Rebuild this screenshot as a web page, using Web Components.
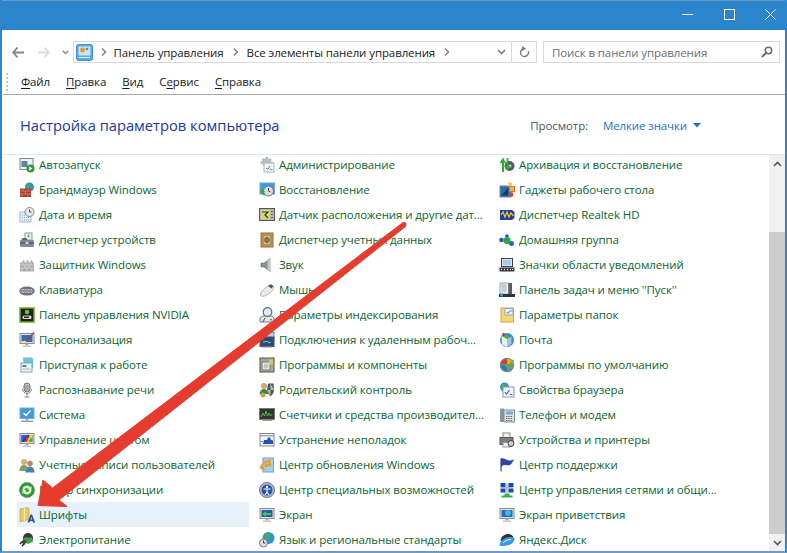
<!DOCTYPE html>
<html lang="ru">
<head>
<meta charset="utf-8">
<title>Все элементы панели управления</title>
<style>
  html, body { margin: 0; padding: 0; height: 100%; overflow: hidden; background: #fff; }
  body { font-family: "Open Sans", "Noto Sans", sans-serif; }
</style>
</head>
<body>
<cp-window>
  <cp-titlebar></cp-titlebar>
  <cp-navbar></cp-navbar>
  <cp-menubar></cp-menubar>
  <cp-header></cp-header>
  <cp-list>
    <cp-item icon="autoplay">Автозапуск</cp-item>
    <cp-item icon="admin">Администрирование</cp-item>
    <cp-item icon="backup">Архивация и восстановление</cp-item>
    <cp-item icon="firewall">Брандмауэр Windows</cp-item>
    <cp-item icon="recovery">Восстановление</cp-item>
    <cp-item icon="gadgets">Гаджеты рабочего стола</cp-item>
    <cp-item icon="clock">Дата и время</cp-item>
    <cp-item icon="sensor">Датчик расположения и другие дат...</cp-item>
    <cp-item icon="realtek">Диспетчер Realtek HD</cp-item>
    <cp-item icon="devices">Диспетчер устройств</cp-item>
    <cp-item icon="safe">Диспетчер учетных данных</cp-item>
    <cp-item icon="homegroup">Домашняя группа</cp-item>
    <cp-item icon="defender">Защитник Windows</cp-item>
    <cp-item icon="sound">Звук</cp-item>
    <cp-item icon="tray">Значки области уведомлений</cp-item>
    <cp-item icon="keyboard">Клавиатура</cp-item>
    <cp-item icon="mouse">Мышь</cp-item>
    <cp-item icon="taskbar">Панель задач и меню ''Пуск''</cp-item>
    <cp-item icon="nvidia">Панель управления NVIDIA</cp-item>
    <cp-item icon="index">Параметры индексирования</cp-item>
    <cp-item icon="folderopt">Параметры папок</cp-item>
    <cp-item icon="personal">Персонализация</cp-item>
    <cp-item icon="remote">Подключения к удаленным рабоч...</cp-item>
    <cp-item icon="mail">Почта</cp-item>
    <cp-item icon="start">Приступая к работе</cp-item>
    <cp-item icon="programs">Программы и компоненты</cp-item>
    <cp-item icon="defaults">Программы по умолчанию</cp-item>
    <cp-item icon="speech">Распознавание речи</cp-item>
    <cp-item icon="parental">Родительский контроль</cp-item>
    <cp-item icon="browser">Свойства браузера</cp-item>
    <cp-item icon="system">Система</cp-item>
    <cp-item icon="perf">Счетчики и средства производител...</cp-item>
    <cp-item icon="phone">Телефон и модем</cp-item>
    <cp-item icon="color">Управление цветом</cp-item>
    <cp-item icon="trouble">Устранение неполадок</cp-item>
    <cp-item icon="printer">Устройства и принтеры</cp-item>
    <cp-item icon="users">Учетные записи пользователей</cp-item>
    <cp-item icon="update">Центр обновления Windows</cp-item>
    <cp-item icon="support">Центр поддержки</cp-item>
    <cp-item icon="sync">Центр синхронизации</cp-item>
    <cp-item icon="access">Центр специальных возможностей</cp-item>
    <cp-item icon="network">Центр управления сетями и общи...</cp-item>
    <cp-item icon="fonts" selected>Шрифты</cp-item>
    <cp-item icon="screen">Экран</cp-item>
    <cp-item icon="welcome">Экран приветствия</cp-item>
    <cp-item icon="power">Электропитание</cp-item>
    <cp-item icon="lang">Язык и региональные стандарты</cp-item>
    <cp-item icon="yadisk">Яндекс.Диск</cp-item>
  </cp-list>
  <cp-arrow></cp-arrow>
</cp-window>

<script>
// monitor outline shared by several of the control panel icons
function monitor(screen) {
  return `<rect x="1" y="1.5" width="14" height="10" fill="#dfe3e6" stroke="#8a9096"/>
    <rect x="2.5" y="3" width="11" height="7" fill="${screen}"/>
    <rect x="6.5" y="11.5" width="3" height="2" fill="#a9adb1"/><rect x="4" y="13.5" width="8" height="1.5" fill="#c4c7ca"/>`;
}
function globe(cx, cy, r) {
  return `<circle cx="${cx}" cy="${cy}" r="${r}" fill="#2f8fd8"/>
    <path d="M${cx - r * .7} ${cy - r * .5}q${r * .6} -${r * .4} ${r} 0q-${r * .1} ${r * .7} -${r * .6} ${r * .8}z" fill="#4caf3c"/>`;
}

const ICONS = {
  autoplay: `<rect x="1" y="1.5" width="13" height="11" fill="#eef2f5" stroke="#7d8890"/><rect x="2.5" y="4" width="6" height="6" fill="#5a8a9c"/><circle cx="11.5" cy="11.5" r="4" fill="#2f9a3a"/><path d="M10.2 9.3l3.2 2.2-3.2 2.2z" fill="#fff"/>`,
  firewall: globe(10.5, 5, 4.5) + `<rect x="1" y="6.5" width="11" height="8.5" fill="#a6402c"/><path d="M1 9h11M1 12h11M4 6.5V9M9 6.500V9M6.500 9v3M3 12v3M9 12v3" stroke="#d98f78" stroke-width=".7"/>`,
  clock: `<rect x="1" y="5" width="11" height="10" fill="#e8f0f8" stroke="#a8b8c8"/><path d="M3 8h7M3 10.5h7M3 13h7" stroke="#6fa8dc" stroke-dasharray="1 1"/><circle cx="10.5" cy="5" r="4.5" fill="#e8e8e4" stroke="#8a8a86"/><path d="M10.5 2.5V5h2" fill="none" stroke="#555"/>`,
  devices: `<rect x="6" y="1" width="7" height="7" fill="#eef2ee" stroke="#8e9a90"/><path d="M9.5 2.5v3" stroke="#4caf50" stroke-width="1.5"/><path d="M2.5 8l1-2h4l1 2z" fill="#666"/><rect x="1" y="8" width="14" height="7" rx="1" fill="#7d8c9a"/><path d="M1 11h14" stroke="#3c4850"/><rect x="6.5" y="10" width="3" height="2" fill="#d0d6da"/>`,
  defender: `<path d="M1 14.5v-9h2.5v-2h2v2h2v-2h2v2h2v-2h2v2H15v9z" fill="#a8abaa"/><path d="M1 8h14M1 11h14M4 5.5v2.500M8 5.500v2.500M12 5.500v2.500M6 8v3M10 8v3M3 11v3.500M8 11v3.500M13 11v3.500" stroke="#d9dbda" stroke-width=".8"/>`,
  keyboard: `<ellipse cx="8" cy="9" rx="7.8" ry="4.5" fill="#6b7279"/><path d="M2.5 7.5h11M1.5 9h13M2.5 10.5h11" stroke="#d4d8db" stroke-dasharray="1 .6"/>`,
  nvidia: `<rect x="1" y="1" width="14" height="14" fill="#1d1d1d" stroke="#6fae1c" stroke-width="1.5"/><circle cx="8" cy="5" r="2.2" fill="#76c925"/><rect x="3.5" y="8.5" width="9" height="3.5" rx="1.5" fill="#d8d8d8"/><rect x="5" y="9.5" width="5" height="1.5" fill="#222"/>`,
  personal: monitor('#2b6fc0') + `<path d="M5 9.5l3-1 1.500-3L5 9z" fill="#38a838"/><path d="M7 9l8-8.500" stroke="#c8352a" stroke-width="1.3"/><path d="M3 9.500h4" stroke="#f0e060"/>`,
  start: `<path d="M4 .5h9l1 1.500v9l-9 .5z" fill="#6cc4d8"/><rect x="2" y="6" width="11" height="9" fill="#eef4f8" stroke="#7aa8c0"/><rect x="3.5" y="8" width="4" height="2" fill="#3a8fc0"/><path d="M3.500 12h8" stroke="#9bb8c8"/>`,
  speech: `<rect x="5" y="1" width="6" height="9" rx="3" fill="#c4c9cd" stroke="#6f767c"/><path d="M5.500 4h5M5.500 6h5M5.500 8h5" stroke="#6f767c" stroke-width=".7"/><path d="M3.500 7a4.500 4.500 0 0 0 9 0M8 11.500V15M5.500 15h5" fill="none" stroke="#7d848a"/>`,
  system: `<rect x="1" y="1" width="14" height="10.5" fill="#3f9be0" stroke="#7fa8c8"/><path d="M4.500 6L7 8.500l4.500-5" fill="none" stroke="#fff" stroke-width="1.5"/><rect x="6.5" y="11.5" width="3" height="2" fill="#a9adb1"/><rect x="2" y="13.5" width="12" height="1.5" fill="#9aa0a5"/>`,
  color: monitor('#1c2f9c') + `<path d="M5 10l3.500-7 1.500 7z" fill="#e8322a"/><path d="M8 10l2.500-7h3v7z" fill="#f0d020"/><path d="M2.500 10V3h6z" fill="#2060e0"/><path d="M9.500 10l2-4 2 1v3z" fill="#2cb84a"/>`,
  users: `<circle cx="5" cy="5" r="3" fill="#d8b080"/><path d="M.5 14c0-4 2-6 4.500-6s4.500 2 4.500 6z" fill="#7fa060"/><circle cx="11" cy="6.5" r="2.8" fill="#b88a5c"/><path d="M6.500 15.500c0-4 2-6 4.500-6s4.500 2 4.500 6z" fill="#4a80b8"/>`,
  sync: `<circle cx="8" cy="8" r="7.5" fill="#2c9a34" stroke="#5a7a5c" stroke-width=".6"/><path d="M3.500 8a4.500 4.500 0 0 1 7.800-3l1.200-1v4h-4l1.200-1.200A2.800 2.800 0 0 0 5.300 8zM12.500 8a4.500 4.500 0 0 1-7.800 3l-1.200 1V8h4L6.300 9.200A2.800 2.800 0 0 0 10.700 8z" fill="#d8f4c8"/>`,
  fonts: `<path d="M1 2l8-1.500 1 1v11l-9 2.500z" fill="#e6c868" stroke="#b0903a" stroke-width=".5"/><path d="M5.500 1v12.500" stroke="#f6e8a8" stroke-width="1.500"/><path d="M8.500 15.500l3-8h1.500l3 8h-2l-.5-1.600h-2.500l-.5 1.600zm3-3h1.500l-.7-2.400z" fill="#1c4cb0"/>`,
  power: `<circle cx="9" cy="6" r="5" fill="#3a3a3a"/><path d="M5 5.500h8l1 4-5 2.500-4-2.500z" fill="#3fa044"/><path d="M4 9l-3 3M6 11l-3 3" stroke="#222" stroke-width="1.5"/><rect x="3" y="8" width="4" height="4" transform="rotate(45 5 10)" fill="#444"/>`,
  admin: `<path d="M7 0h2l.5 2 1.800-.8 1.400 1.400L12 4.500l2 .5v2l-2 .5.400 1h-8L3.500 7l-2-.5v-2l2-.5-.8-1.800L4 .9l1.800.9z" fill="#b8bcc0"/><rect x="5" y="6" width="10" height="9" fill="#f2f6fa" stroke="#a4b4c4"/><path d="M7 11l1.500 1.500L11 9" fill="none" stroke="#3a7fd0"/><path d="M11.500 12.500h2" stroke="#3a7fd0"/>`,
  recovery: `<rect x="1" y="1" width="14.5" height="11" fill="#3f9be0" stroke="#6fa8cc"/><circle cx="9.5" cy="9" r="5" fill="#d8dcde" stroke="#6d7478"/><path d="M9.500 6v3l2 1" fill="none" stroke="#444"/><path d="M1 10l2.500-3L6 10H4.500c0 2 1 3 2.500 3.500-2.500.5-4.500-1-4.500-3.500z" fill="#36a83a"/>`,
  sensor: `<rect x=".5" y="1.5" width="15" height="12" fill="#b8bab0" stroke="#55584f"/><rect x="2" y="3" width="9" height="9" fill="#d8d868"/><path d="M3 5h6L6 8l3 3" fill="none" stroke="#333" stroke-width="1.2"/><path d="M13 4v1M13 7v1M13 10v1" stroke="#222" stroke-width="1.2"/>`,
  safe: `<rect x="2" y="1" width="12" height="14" fill="#c4a062" stroke="#8a6c38"/><rect x="4" y="3" width="8" height="10" fill="#d4b47c" stroke="#9c7c44"/><circle cx="8" cy="8" r="2.3" fill="#a08048" stroke="#6c5428"/>`,
  sound: `<path d="M2 6h3l6-4.500v13L5 10H2z" fill="#8c9196" stroke="#63686c" stroke-width=".6"/><path d="M8.500 3v10l2.500 1.500v-13z" fill="#c6c9cc"/>`,
  mouse: `<path d="M1.500 12C3 8 8 4 12 3c2 0 3 2 2.500 3.500-1 3-5 6-9 7.500-3 .800-4.500 0-4-2z" fill="#e8eaec" stroke="#9a9ea2" stroke-width=".7"/><path d="M9 3.500c2-1.500 4.500-1.500 5.500 1L12 6.500z" fill="#50606c"/>`,
  index: `<path d="M1 15v-4l3-2h9l2 2v4z" fill="#e4e6e8" stroke="#7a8084"/><circle cx="8.5" cy="5" r="4.3" fill="#dfeefa" stroke="#5a6c7a" stroke-width="1.2"/><path d="M4 15l2-4" stroke="#5a6c7a" stroke-width="1.2"/><rect x="11" y="12" width="2" height="1.3" fill="#3cb04a"/>`,
  remote: `<rect x="4" y=".5" width="11" height="8" fill="#b4cfe8" stroke="#6c8cac"/><rect x="1" y="5" width="14" height="9.5" fill="#2a4a80" stroke="#555"/><path d="M4 10h2l2-1 2 2 2-1" stroke="#7fe07f" fill="none"/><rect x="3" y="14.5" width="10" height="1" fill="#888"/>`,
  programs: `<rect x="1" y="1" width="14" height="14" fill="#a5aaa0" stroke="#50564c"/><rect x="3" y="5" width="8" height="8" fill="#e6e8e2" stroke="#7a7f76"/><circle cx="7" cy="9" r="2.5" fill="#c0c4bc"/><rect x="10" y="2.5" width="4" height="5" fill="#d8c86a"/>`,
  parental: `<circle cx="5" cy="4" r="3" fill="#d8a860"/><path d="M.5 12c0-3 2-5 4.500-5s4.500 2 4.500 5z" fill="#3a8a50"/><path d="M9 1.500h5.500L15 8c0 3-2 5-3.500 6.500C10 13 8 11 8 8z" fill="#2b5cac"/><path d="M11.500 1.500V8H15M8 8h3.500v6.500" fill="#e8b830"/><circle cx="4" cy="13" r="2.5" fill="#caa050"/>`,
  perf: `<rect x=".5" y="1.5" width="15" height="11" fill="#30332e" stroke="#777"/><path d="M2 10l2-4 1.500 3L7 4l1.500 5L10 6l1.500 3L13 7" fill="none" stroke="#4ebc4e"/><rect x="3" y="12.5" width="10" height="1.5" fill="#9a9c98"/>`,
  trouble: `<rect x="1" y="1.5" width="14" height="12.5" fill="#f2f5f8" stroke="#7a8894"/><path d="M1 3.800h14" stroke="#7a8894"/><path d="M4 12l1-4h3l1-2.500h2l1 2.500 2 .5V12z" fill="#2250b0"/><path d="M2 9.500h2" stroke="#46a846"/>`,
  update: `<rect x="4" y="1" width="10.5" height="14" fill="#a5d0f0" stroke="#6ea0d0"/><path d="M5 4.500L8 3l.5 3-3 1zM8.500 3l3-.5.5 3-3 .5zM5.500 7.500l3-1 .5 3-3 1zM9 6.500l3-.5.5 3-3 .5z" fill="#e8a020"/><path d="M8 12.500C3 14 0 12 1.500 8.500 2.500 6 5 5 7 5 4 6 3 8 3.500 10c.5 1.800 2.500 2.500 4.500 2.500z" fill="#f09a20"/>`,
  access: `<circle cx="8" cy="8" r="7.5" fill="#b4bcc8" stroke="#6a7480"/><circle cx="8" cy="8" r="5.5" fill="#2a4fb0"/><circle cx="8" cy="5" r="1.2" fill="#fff"/><path d="M4.500 7h7M8 7v3l-2 3M8 10l2 3" stroke="#fff" fill="none" stroke-width="1.1"/>`,
  screen: monitor('#1f5cb4') + `<path d="M3 7l4-3v2h5v2H7v2z" fill="#4cc23e"/>`,
  lang: globe(9.5, 6, 6) + `<circle cx="4.5" cy="11" r="4" fill="#dfe1e2" stroke="#7a7d80"/><path d="M4.500 8.500V11h2" fill="none" stroke="#444"/>`,
  backup: `<circle cx="10.5" cy="9" r="5" fill="#585c5e"/><circle cx="11" cy="9" r="1.5" fill="#ccc"/><path d="M3 15V6H.5L4 .5 7 6H5v9z" fill="#36a83a"/><path d="M7.500 1v8h-2l3 5 3-5h-2V1z" fill="#36a83a" opacity=".9"/>`,
  gadgets: `<rect x="1" y="4" width="11" height="11" fill="#2d6ca8" stroke="#6a8aa8"/><path d="M2.500 13.500L9 5.500v8z" fill="#173c64"/><rect x="9" y=".5" width="4" height="4" fill="#f0d060"/><rect x="10.5" y="4.5" width="5" height="5" fill="#f4b060" stroke="#e07020"/><rect x="10" y="10.5" width="4" height="4" fill="#e04030"/>`,
  realtek: `<path d="M1 3h12l2.500 2v6L13 13H1z" fill="#1f3fa8"/><path d="M2 8l2-3 2 5 2-5 2 5 2-4 2.500 3" fill="none" stroke="#f0c820" stroke-width="1.3"/>`,
  homegroup: `<circle cx="2.5" cy="8" r="2.3" fill="#1f5cb0"/><circle cx="8" cy="4" r="1.8" fill="#1f5cb0"/><circle cx="8" cy="8.5" r="3.5" fill="#2fa24a"/><circle cx="12.5" cy="11.5" r="2.5" fill="#1f6cb8"/>`,
  tray: `<rect x="2.5" y="1.5" width="11" height="8" fill="#dfe8f0" stroke="#3c4044"/><rect x="4" y="3" width="8" height="5" fill="#a8c8e8"/><rect x=".5" y="10.5" width="15" height="4" fill="#3c4044"/><path d="M2 12.500h1M5 12.500h1M8 12.500h1M11 12.500h1M13 12.500h1" stroke="#fff"/>`,
  taskbar: `<rect x="1" y="1" width="8.5" height="11" fill="#eef0f2" stroke="#a0a4a8"/><path d="M2.500 3h5M2.500 5h5M2.500 7h5M2.500 9h5" stroke="#a4a8ac"/><rect x="9.5" y="1" width="3.5" height="11" fill="#5a5e62"/><rect x="0" y="12" width="16" height="3" fill="#303438"/><rect x="1" y="11.5" width="3" height="3" fill="#2a80d0"/><rect x="2" y="12.5" width="1" height="1" fill="#f0c020"/>`,
  folderopt: `<rect x="2" y="1" width="12.5" height="14" fill="#f4d67a" stroke="#c8a848"/><rect x="6" y="1.5" width="8" height="6.5" fill="#f4f6f8" stroke="#98a8b8"/><path d="M7.500 5L9 6.500l2-3M11.500 4h2" fill="none" stroke="#3a7fd0"/>`,
  mail: globe(8, 8, 7) + `<path d="M2.500 4L8 7v8l-5-2.500z" fill="#e8eef6"/><path d="M8 7l4.500-2.500V12L8 15z" fill="#a8c0dc"/><rect x="3.5" y="1" width="2" height="3" fill="#d83020"/>`,
  defaults: `<circle cx="8" cy="8" r="7.3" fill="#7a8a90"/><path d="M2 7a6 6 0 0 1 6-5v5z" fill="#d83a2a"/><path d="M8 2a6 6 0 0 1 6 5H8z" fill="#f0b020"/><path d="M2 8h6v6a6 6 0 0 1-6-6z" fill="#2a78d0"/><path d="M6 8.500l3 3.500 6-8.500-1-1-5 6-2-1.500z" fill="#4ab83a"/>`,
  browser: globe(5.5, 5, 4.5) + `<rect x="4" y="5" width="11" height="10" fill="#f4f6fa" stroke="#8898ac"/><path d="M6 10l1.500 2 3-4" fill="none" stroke="#2a6cc8" stroke-width="1.2"/><path d="M11 12.500h2.500" stroke="#2a6cc8"/>`,
  phone: `<rect x="1" y="1.5" width="4" height="13.5" rx=".8" fill="#8c949a"/><rect x="5" y="3" width="10.5" height="12" fill="#dfe3e6" stroke="#848a90"/><rect x="7" y="4.5" width="7" height="3" fill="#6ea8d8"/><path d="M7 9.500h7M7 11.500h7M7 13.500h7" stroke="#555" stroke-dasharray="1.300 1"/>`,
  printer: `<rect x="4" y="1" width="7" height="5" fill="#f2f2f2" stroke="#888"/><rect x="1" y="5.5" width="13" height="7" fill="#7c8084" stroke="#55585c"/><rect x="4" y="10.5" width="7" height="4.5" fill="#eee" stroke="#999"/><circle cx="12" cy="11.5" r="3" fill="#c8ccd0" stroke="#444"/>`,
  support: `<path d="M2 1.500v13" stroke="#3a4a70" stroke-width="1.2"/><path d="M2 1.500c3-1 5 2 8 2 2 0 3.500-.5 5-1-1 2-2 4-4 5.500-2 1-4-.5-6 0-1 .3-2 1-3 2z" fill="#2c48a8"/>`,
  network: `<rect x="1.5" y="1" width="5" height="4" fill="#1c48b0"/><rect x="9.5" y="1" width="5" height="4" fill="#1c48b0"/><rect x="1.5" y="6.5" width="5" height="4" fill="#1c48b0"/><rect x="9.5" y="6.5" width="5" height="4" fill="#1c48b0"/><path d="M8 1v10M2 5.800h12" stroke="#8a9ab8"/><path d="M5.500 11.500h5v2h3v2h-11v-2h3z" fill="#34b050"/>`,
  welcome: monitor('#1c6cc8') + `<circle cx="9" cy="6" r="3" fill="#4cb0f0"/>`,
  yadisk: `<path d="M1.500 9C2 4 6 2 9 2s5 1.500 5.500 4z" fill="#333"/><path d="M.5 13c0-4 6-8 11-8 3 0 4.500 1 4 3-1 3.500-6 6-10.500 6C2 14 .5 14 .5 13z" fill="#3a9be8"/><path d="M4 11c1.500-2 5-3.500 8-3.500" fill="none" stroke="#fff"/>`
};

class CpWindow extends HTMLElement {
  constructor() {
    super();
    this.attachShadow({ mode: 'open' }).innerHTML = `
    <style>
      :host {
        display: flex;
        flex-direction: column;
        position: relative;
        box-sizing: border-box;
        width: 787px;
        height: 553px;
        overflow: hidden;
        background: #fff;
        border: solid #2b85cc;
        border-width: 0 2px 2px 2px;
        border-bottom-color: #6d9dc0;
        color: #000;
        font: 11.5px "Open Sans", "Noto Sans", sans-serif;
        letter-spacing: -0.1px;
      }
    </style>
    <slot></slot>`;
  }
}

class CpTitlebar extends HTMLElement {
  constructor() {
    super();
    this.attachShadow({ mode: 'open' }).innerHTML = `
    <style>
      :host {
        display: flex;
        justify-content: flex-end;
        align-items: center;
        height: 30px;
        margin: 0 -2px;
        padding: 0 11px 2px 0;
        gap: 30px;
        background: #2b85cc;
        border-top: 1px solid #5f9cc9;
        box-sizing: border-box;
      }
      svg { display: block; }
      .min { margin-right: 1px; }
    </style>
    <svg class="min" width="11" height="11"><path d="M0 5.500h11" stroke="#fff"/></svg>
    <svg width="11" height="11"><rect x=".5" y=".5" width="10" height="10" fill="none" stroke="#fff"/></svg>
    <svg width="11" height="11"><path d="M.5.500l10 10M10.500.500l-10 10" stroke="#fff"/></svg>`;
  }
}

class CpNavbar extends HTMLElement {
  constructor() {
    super();
    this.attachShadow({ mode: 'open' }).innerHTML = `
    <style>
      :host {
        display: flex;
        align-items: center;
        height: 36px;
        box-sizing: border-box;
        padding: 11px 5px 3px 10px;
      }
      svg { display: block; flex: none; }
      .nav { margin-right: 14px; }
      .drop { margin: 0 4px 0 -2px; }
      .address, .search {
        display: flex;
        align-items: center;
        box-sizing: border-box;
        height: 22px;
        flex: none;
        border: 1.5px solid #d9d9d9;
      }
      .address { width: 464px; padding-left: 1.5px; }
      .crumb { white-space: nowrap; color: #1a1a1a; }
      .sep { margin: 0 8px 0 9px; }
      .sep.first { margin: 0 7px 0 8px; }
      .spacer { flex: 1; }
      .refresh {
        display: flex; align-items: center; justify-content: center;
        width: 24px; align-self: stretch;
        border-left: 1.5px solid #d9d9d9;
      }
      .search {
        width: 237px;
        margin-left: 6px;
        padding: 0 6px 0 8px;
        justify-content: space-between;
        color: #6d6d6d;
        white-space: nowrap;
      }
    </style>
    <svg class="nav" width="12" height="11" viewBox="0 0 12 11"><path d="M5.500.7L1.200 5.500l4.300 4.800M1.500 5.500H12" fill="none" stroke="#858585" stroke-width="1.800"/></svg>
    <svg class="nav" width="12" height="11" viewBox="0 0 12 11"><path d="M6.500.7l4.300 4.800-4.300 4.800M10.500 5.500H0" fill="none" stroke="#dcdcdc" stroke-width="1.800"/></svg>
    <svg class="drop" width="7" height="5" viewBox="0 0 7 5"><path d="M.7.700l2.800 2.800L6.300.7" fill="none" stroke="#8a8a8a" stroke-width="1.300"/></svg>
    <div class="address">
      <svg width="17" height="17" viewBox="0 0 17 17"><rect x=".5" y=".5" width="16" height="16" rx="2" fill="#54abe8" stroke="#3f8fcc"/><rect x="2.500" y="2.500" width="12" height="9" fill="#c8e6f8"/><circle cx="6.500" cy="6" r="2.500" fill="#e09a30"/><circle cx="11" cy="5" r="1.300" fill="#4a8acc"/><path d="M3 13.500h11" stroke="#e8f4fc"/></svg>
      <svg class="sep first" width="6" height="8" viewBox="0 0 6 8"><path d="M1 .5L4.500 4 1 7.500" fill="none" stroke="#808080" stroke-width="1.500"/></svg>
      <span class="crumb">Панель управления</span>
      <svg class="sep" width="6" height="8" viewBox="0 0 6 8"><path d="M1 .5L4.500 4 1 7.500" fill="none" stroke="#808080" stroke-width="1.500"/></svg>
      <span class="crumb">Все элементы панели управления</span>
      <svg class="sep" width="6" height="8" viewBox="0 0 6 8"><path d="M1 .5L4.500 4 1 7.500" fill="none" stroke="#808080" stroke-width="1.500"/></svg>
      <span class="spacer"></span>
      <svg style="margin-right:5px" width="9" height="6" viewBox="0 0 9 6"><path d="M1 1l3.500 3.500L8 1" fill="none" stroke="#7a7a7a" stroke-width="1.600"/></svg>
      <div class="refresh"><svg width="11" height="12" viewBox="0 0 11 12"><path d="M5.500 2.500a4 4 0 1 1-4 4" transform="rotate(70 5.500 6.500)" fill="none" stroke="#7a7a7a" stroke-width="1.400"/><path d="M3 0l4 2.500L3.500 5z" fill="#7a7a7a"/></svg></div>
    </div>
    <div class="search">
      <span>Поиск в панели управления</span>
      <svg width="12" height="12" viewBox="0 0 12 12"><circle cx="7.500" cy="4.500" r="3.200" fill="none" stroke="#6d6d6d" stroke-width="1.500"/><path d="M5 7L1 11" stroke="#6d6d6d" stroke-width="2"/></svg>
    </div>`;
  }
}

class CpMenubar extends HTMLElement {
  constructor() {
    super();
    this.attachShadow({ mode: 'open' }).innerHTML = `
    <style>
      :host {
        display: flex;
        align-items: center;
        height: 29px;
        box-sizing: border-box;
        padding: 3px 0 0 3px;
        border-bottom: 1px solid #a9a9a9;
        margin-left: 1px;
        color: #1a1a1a;
      }
      .grip { width: 2px; height: 18px; margin-right: 13px; background: repeating-linear-gradient(#c4c4c4 0 2px, transparent 2px 4px); }
      span { margin-right: 16px; }
      u { text-underline-offset: 2px; }
    </style>
    <div class="grip"></div>
    <span><u>Ф</u>айл</span><span><u>П</u>равка</span><span><u>В</u>ид</span><span>С<u>е</u>рвис</span><span><u>С</u>правка</span>`;
  }
}

class CpHeader extends HTMLElement {
  constructor() {
    super();
    this.attachShadow({ mode: 'open' }).innerHTML = `
    <style>
      :host {
        display: flex;
        align-items: center;
        height: 60px;
        box-sizing: border-box;
        padding: 1px 84px 0 18px;
        border-bottom: 1px solid #dfe8f1;
      }
      h1 { margin: 0; font-size: 14.7px; font-weight: 400; letter-spacing: 0; color: #1a3a9c; flex: 1; white-space: nowrap; }
      .label { color: #4f4f68; margin-right: 15px; }
      .value { color: #1a6fd0; margin-right: 6px; letter-spacing: -0.12px; }
      svg { display: block; }
    </style>
    <h1>Настройка параметров компьютера</h1>
    <span class="label">Просмотр:</span>
    <span class="value">Мелкие значки</span>
    <svg width="8" height="5" viewBox="0 0 8 5"><path d="M0 0h8L4 4.500z" fill="#1a6fd0"/></svg>`;
  }
}

class CpList extends HTMLElement {
  constructor() {
    super();
    this.attachShadow({ mode: 'open' }).innerHTML = `
    <style>
      :host {
        display: flex;
        flex: 1;
        min-height: 0;
        overflow: hidden;
      }
      .view { flex: 1; overflow: hidden; }
      .grid {
        display: grid;
        grid-template-columns: repeat(3, 240px);
        grid-auto-rows: 25px;
        margin-top: -3px;
        padding-left: 15px;
      }
      .bar {
        display: flex;
        flex-direction: column;
        width: 16px;
        background: #f0f0f0;
      }
      .btn { display: flex; align-items: center; justify-content: center; height: 16px; flex: none; }
      .thumb { height: 302px; margin-top: 59px; background: #cdcdcd; flex: none; }
      .btn.down { margin-top: auto; }
      .btn svg { display: block; }
    </style>
    <div class="view"><div class="grid"><slot></slot></div></div>
    <div class="bar">
      <div class="btn" style="height:18px"><svg width="9" height="6" viewBox="0 0 9 6"><path d="M1 5l3.500-3.500L8 5" fill="none" stroke="#555" stroke-width="1.600"/></svg></div>
      <div class="thumb"></div>
      <div class="btn down"><svg width="9" height="6" viewBox="0 0 9 6"><path d="M1 1l3.500 3.500L8 1" fill="none" stroke="#555" stroke-width="1.600"/></svg></div>
    </div>`;
  }
}

class CpItem extends HTMLElement {
  constructor() {
    super();
    this.attachShadow({ mode: 'open' }).innerHTML = `
    <style>
      :host {
        display: flex;
        align-items: center;
        width: 232px;
        height: 25px;
        box-sizing: border-box;
        padding-left: 2px;
        gap: 4px;
        white-space: nowrap;
        color: #0a6630;
      }
      :host([selected]) { background: #e6f1fa; }
      svg { display: block; flex: none; }
    </style>
    <svg width="16" height="16" viewBox="0 0 16 16"></svg>
    <slot></slot>`;
  }
  connectedCallback() {
    this.shadowRoot.querySelector('svg').innerHTML = ICONS[this.getAttribute('icon')] || '';
  }
}

// red annotation arrow laid over the list
class CpArrow extends HTMLElement {
  constructor() {
    super();
    this.attachShadow({ mode: 'open' }).innerHTML = `
    <style>
      :host { position: absolute; left: -2px; top: 0; width: 787px; height: 553px; pointer-events: none; }
      svg { display: block; }
    </style>
    <svg width="787" height="553" viewBox="0 0 787 553">
      <path d="M38 505.500L43 480l9.500 8L403 222.500q2.500-1 3 1.500l-.5 2.500L59 500l8 6.500z" fill="#e63c2f" stroke="#e63c2f" stroke-linejoin="round"/>
    </svg>`;
  }
}

customElements.define('cp-window', CpWindow);
customElements.define('cp-titlebar', CpTitlebar);
customElements.define('cp-navbar', CpNavbar);
customElements.define('cp-menubar', CpMenubar);
customElements.define('cp-header', CpHeader);
customElements.define('cp-list', CpList);
customElements.define('cp-item', CpItem);
customElements.define('cp-arrow', CpArrow);
</script>
</body>
</html>
